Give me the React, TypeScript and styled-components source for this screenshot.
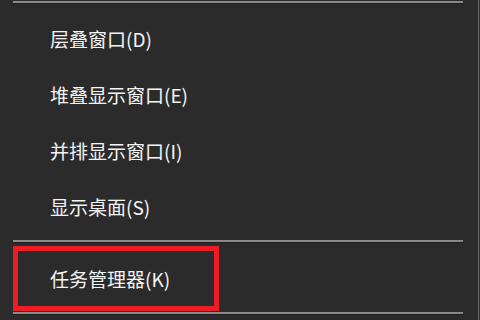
import React from 'react';
import styled, { createGlobalStyle } from 'styled-components';

const GlobalStyle = createGlobalStyle`
  html, body {
    margin: 0;
    padding: 0;
    background: #2b2b2b;
  }
  body {
    font-family: "Noto Sans CJK SC", "Noto Sans", sans-serif;
  }
`;

const Menu = styled.div`
  width: 479px;
  height: 320px;
  box-sizing: border-box;
  padding-top: 1px;
  border-right: 1px solid #6a6a6a;
  background: #2b2b2b;
  overflow: hidden;
`;

const Separator = styled.div<{ $top: number }>`
  margin: ${(p) => p.$top}px 0 0 13px;
  width: 450px;
  height: 2px;
  background: #8a8a8a;
  box-shadow: 0 1px 0 #1f1f1f;
`;

const List = styled.div`
  display: flex;
  flex-direction: column;
  margin-top: 7px;
`;

const Item = styled.div`
  height: 56px;
  display: flex;
  align-items: center;
  padding-left: 50px;
  font-size: 19px;
  color: #f4f4f4;
  white-space: nowrap;
`;

const Highlight = styled.div`
  margin: 4px 0 0 13px;
  width: 206px;
  height: 65px;
  box-sizing: border-box;
  border: 5px solid #ee1c25;
  display: flex;
  align-items: center;
  padding-left: 32px;
  font-size: 19px;
  color: #f4f4f4;
  white-space: nowrap;
`;

const items = ['层叠窗口(D)', '堆叠显示窗口(E)', '并排显示窗口(I)', '显示桌面(S)'];

export default function App() {
  return (
    <>
      <GlobalStyle />
      <Menu>
        <Separator $top={0} />
        <List>
          {items.map((label) => (
            <Item key={label}>{label}</Item>
          ))}
        </List>
        <Separator $top={6} />
        <Highlight>任务管理器(K)</Highlight>
        <Separator $top={1} />
      </Menu>
    </>
  );
}
